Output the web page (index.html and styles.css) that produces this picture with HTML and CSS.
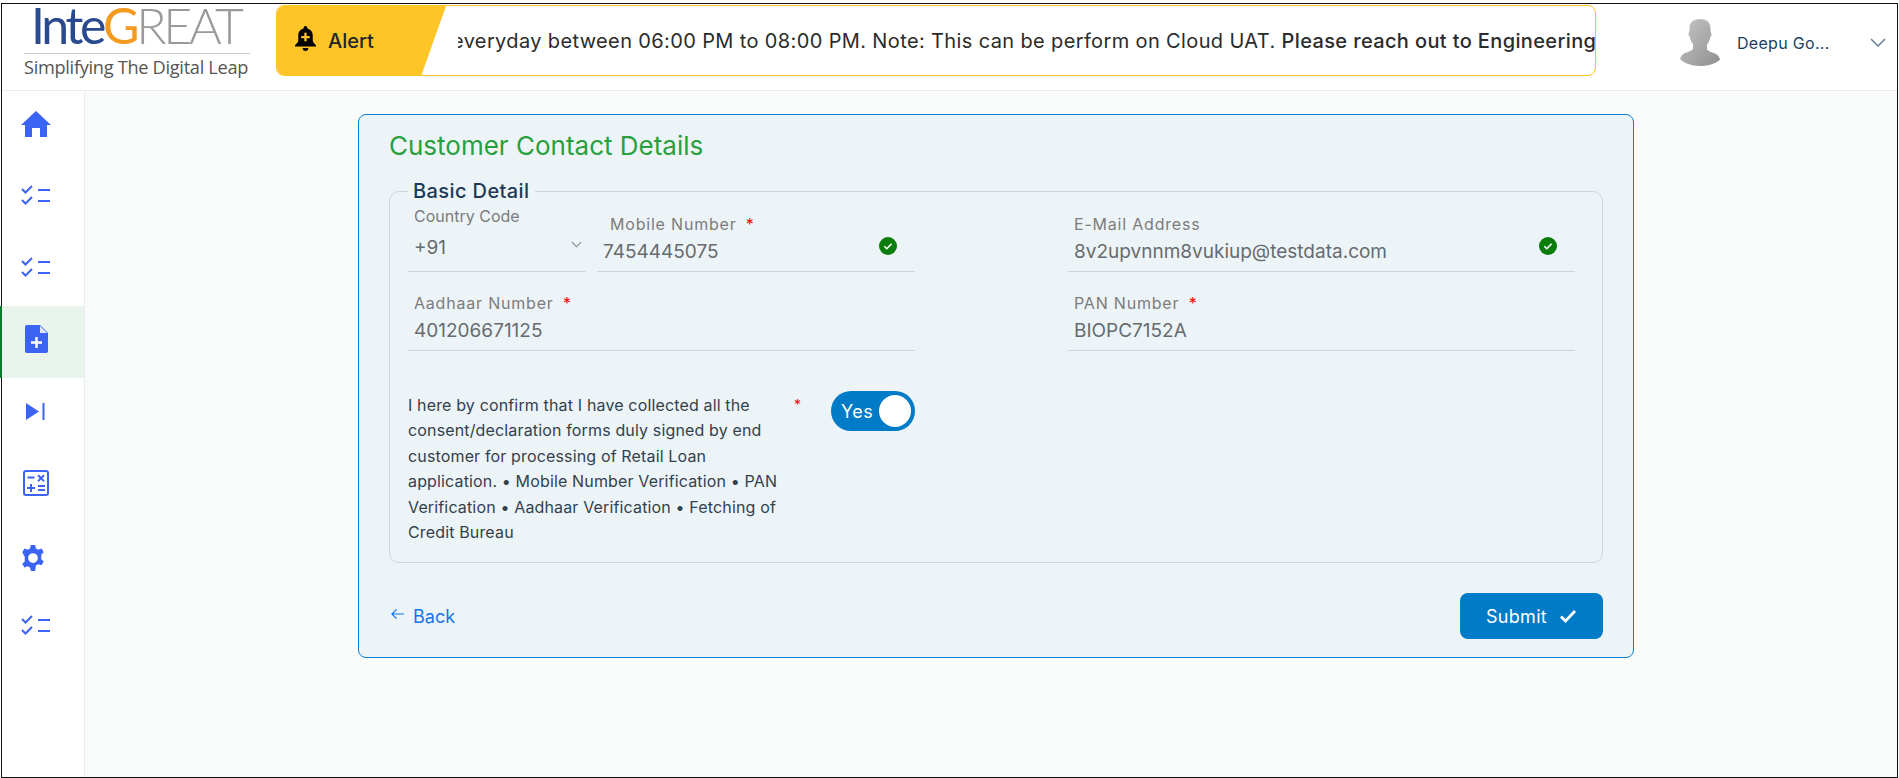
FILE: index.html
```html
<!DOCTYPE html>
<html lang="en">
<head>
  <meta charset="UTF-8" />
  <meta name="viewport" content="width=device-width, initial-scale=1.0" />
  <title>Customer Contact Details</title>
  <link rel="stylesheet" href="styles.css">
</head>
<body>
  <div class="frame">
    <header class="topbar">
      <div class="logo">
        <div class="logo-word"><span class="logo-inte">Inte</span><span class="logo-g">G</span><span class="logo-reat">REAT</span></div>
        <div class="logo-tag">Simplifying The Digital Leap</div>
      </div>

      <div class="alert">
        <div class="alert-tag">
          <svg class="bell" viewBox="0 0 22 26">
            <path fill="#000" d="M11 0a2 2 0 0 1 2 2v.6c3.6.8 5.6 3.8 5.6 7.4v5.2c0 1.6 1.2 3 3.4 4.8v1.5H0V20c2.2-1.8 3.4-3.2 3.4-4.8V10c0-3.6 2-6.6 5.6-7.4V2a2 2 0 0 1 2-2z"/>
            <path fill="#000" d="M8 23h6a3 3 0 0 1-6 0z"/>
            <path fill="#ffc526" d="M9.8 7h2.4v3.3h3.3v2.4h-3.3V16H9.8v-3.3H6.5v-2.4h3.3z"/>
          </svg>
          <span>Alert</span>
        </div>
        <div class="alert-text">
          <p>everyday between 06:00 PM to 08:00 PM. Note: This can be perform on Cloud UAT. <b>Please reach out to Engineering</b></p>
        </div>
      </div>

      <div class="user">
        <svg class="avatar" viewBox="0 0 40 47">
          <defs>
            <linearGradient id="avatarGrad" x1="0" y1="0" x2="1" y2="1">
              <stop offset="0" stop-color="#c6c6c6"/>
              <stop offset="1" stop-color="#8f8f8f"/>
            </linearGradient>
          </defs>
          <path fill="url(#avatarGrad)" d="M20 0c7 0 10.500 3.500 10.500 10 0 2 .3 3.500.8 4.500.5 1.200 0 3-1 3.500-.5 3-1.800 6-3.300 7.500v5c1 1.500 5 3 8 4 2.500 1 4.500 3.500 5 6-4 4-11 6.500-20 6.500S4 44 0 40c.5-2.500 2.500-5 5-6 3-1 7-2.500 8-4v-5c-1.500-1.500-2.800-4.500-3.300-7.500-1-.5-1.500-2.300-1-3.500.5-1 .8-2.500.8-4.500C9.500 3.500 13 0 20 0z"/>
        </svg>
        <span class="user-name">Deepu Go...</span>
        <svg class="user-caret" viewBox="0 0 16 9"><path d="M1 1l7 7 7-7"/></svg>
      </div>
    </header>

    <div class="content">
      <nav class="sidebar">
        <a class="nav-item">
          <svg class="icon" viewBox="0 0 30 26"><path d="M15 0L30 14h-4v12h-7v-9h-8v9H4V14H0z"/></svg>
        </a>
        <a class="nav-item">
          <svg class="icon-line" viewBox="0 0 30 20"><path d="M1 4l3.500 3.500L11 1M1 15l3.500 3.500L11 12M17 5h12M17 16h12"/></svg>
        </a>
        <a class="nav-item">
          <svg class="icon-line" viewBox="0 0 30 20"><path d="M1 4l3.500 3.500L11 1M1 15l3.500 3.500L11 12M17 5h12M17 16h12"/></svg>
        </a>
        <a class="nav-item active">
          <svg class="icon icon-doc" viewBox="0 0 23 28">
            <path d="M2 0h13l8 8v18a2 2 0 0 1-2 2H2a2 2 0 0 1-2-2V2a2 2 0 0 1 2-2z"/>
            <path fill="#e0e6f5" d="M15 1l7 7h-7z"/>
            <path fill="#fff" d="M10.300 12h2.400v4.300H17v2.400h-4.300V23h-2.400v-4.300H6v-2.400h4.300z"/>
          </svg>
        </a>
        <a class="nav-item">
          <svg class="icon icon-skip" viewBox="0 0 19 17"><path d="M0 0l13 8.500L0 17zM16.500 0h2v17h-2z"/></svg>
        </a>
        <a class="nav-item">
          <svg class="icon icon-calc" viewBox="0 0 26 26">
            <path fill-rule="evenodd" d="M3 0h20a3 3 0 0 1 3 3v20a3 3 0 0 1-3 3H3a3 3 0 0 1-3-3V3a3 3 0 0 1 3-3zm0 2a1 1 0 0 0-1 1v20a1 1 0 0 0 1 1h20a1 1 0 0 0 1-1V3a1 1 0 0 0-1-1z"/>
            <path d="M4.500 6.500h7v2h-7zM7 14h2v3h3v2H9v3H7v-3H4v-2h3zM15 15h7v2h-7zM15 19h7v2h-7zM15.700 4.500l2.300 2.300 2.300-2.300 1.400 1.400-2.300 2.300 2.300 2.300-1.400 1.400-2.300-2.300-2.300 2.300-1.400-1.400 2.300-2.300-2.300-2.300z"/>
          </svg>
        </a>
        <a class="nav-item">
          <svg class="icon icon-gear" viewBox="0 0 24 24"><path fill-rule="evenodd" d="M10 0h4l.7 3.200c.8.3 1.500.6 2.100 1.100l3.100-1 2 3.500-2.400 2.200c.1.600.2 1.300.2 2s-.1 1.400-.2 2l2.400 2.200-2 3.500-3.100-1c-.6.500-1.300.8-2.100 1.100L14 24h-4l-.7-3.200c-.8-.3-1.500-.6-2.100-1.100l-3.100 1-2-3.500 2.400-2.200c-.1-.6-.2-1.300-.2-2s.1-1.400.2-2L2.100 6.800l2-3.500 3.100 1c.6-.5 1.300-.8 2.100-1.100zM12 7.500a4.500 4.500 0 1 0 0 9 4.500 4.500 0 0 0 0-9z"/></svg>
        </a>
        <a class="nav-item nav-last">
          <svg class="icon-line" viewBox="0 0 30 20"><path d="M1 4l3.500 3.500L11 1M1 15l3.500 3.500L11 12M17 5h12M17 16h12"/></svg>
        </a>
      </nav>

      <main class="main">
        <section class="card">
          <h1>Customer Contact Details</h1>

          <fieldset class="basic">
            <legend>Basic Detail</legend>

            <div class="form-grid">
              <div class="phone-row">
                <div class="field field-select">
                  <label class="label-top">Country Code</label>
                  <div class="value">+91
                    <svg class="select-caret" viewBox="0 0 12 7"><path d="M1 1l5 5 5-5"/></svg>
                  </div>
                </div>
                <div class="field field-mobile">
                  <label>Mobile Number <i>*</i></label>
                  <div class="value">7454445075
                    <svg class="ok" viewBox="0 0 18 18"><circle cx="9" cy="9" r="9"/><path d="M5.300 9.200l2.500 2.500 4.800-5"/></svg>
                  </div>
                </div>
              </div>

              <div class="field">
                <label>E-Mail Address</label>
                <div class="value">8v2upvnnm8vukiup@testdata.com
                  <svg class="ok" viewBox="0 0 18 18"><circle cx="9" cy="9" r="9"/><path d="M5.300 9.200l2.500 2.500 4.800-5"/></svg>
                </div>
              </div>

              <div class="field">
                <label>Aadhaar Number <i>*</i></label>
                <div class="value">401206671125</div>
              </div>

              <div class="field">
                <label>PAN Number <i>*</i></label>
                <div class="value">BIOPC7152A</div>
              </div>
            </div>

            <div class="consent">
              <p>I here by confirm that I have collected all the consent/declaration forms duly signed by end customer for processing of Retail Loan application. • Mobile Number Verification • PAN Verification • Aadhaar Verification • Fetching of Credit Bureau</p>
              <i>*</i>
              <div class="toggle"><span>Yes</span><b></b></div>
            </div>
          </fieldset>

          <div class="actions">
            <a class="back">
              <svg viewBox="0 0 14 12"><path d="M6 1L1 6l5 5M1 6h13"/></svg>
              Back
            </a>
            <button class="submit">Submit
              <svg viewBox="0 0 18 14"><path d="M2 7.500l4.500 4.500L16 2"/></svg>
            </button>
          </div>
        </section>
      </main>
    </div>
  </div>
</body>
</html>
```

FILE: styles.css
```css
* {
  box-sizing: border-box;
}
html, body {
  margin: 0;
  height: 778px;
  overflow: hidden;
  background: #fff;
}
body {
  padding: 3px 1px 0;
  font-family: Inter, "Liberation Sans", sans-serif;
  color: #212529;
}
.frame {
  height: 775px;
  border: 1px solid #111;
  display: flex;
  flex-direction: column;
}

/* top bar */
.topbar {
  height: 87px;
  flex: none;
  display: flex;
  align-items: flex-start;
  background: #fff;
  border-bottom: 1px solid #e9edf0;
}
.logo {
  width: 274px;
  flex: none;
  padding-left: 22px;
}
.logo-word {
  height: 50px;
  width: 226px;
  padding-left: 7px;
  font-family: Lato, sans-serif;
  font-size: 50px;
  line-height: 42px;
  letter-spacing: -3.300px;
  border-bottom: 1px solid #ccc;
  white-space: nowrap;
}
.logo-inte { color: #2a4a8f; }
.logo-g { color: #f39a1f; }
.logo-reat { color: #9a9a9a; font-weight: 300; }
.logo-tag {
  font-family: "Open Sans", sans-serif;
  font-size: 18.200px;
  line-height: 26px;
  color: #555;
  letter-spacing: -0.3px;
  white-space: nowrap;
}
.alert {
  width: 1320px;
  height: 71px;
  margin-top: 1px;
  flex: none;
  display: flex;
  align-items: center;
  background: #fff;
  border: 1px solid #ffc526;
  border-radius: 8px;
  overflow: hidden;
}
.alert-tag {
  width: 169px;
  height: 100%;
  flex: none;
  display: flex;
  align-items: center;
  gap: 12px;
  padding-left: 18px;
  background: #ffc526;
  clip-path: polygon(0 0, 100% 0, 85.500% 100%, 0 100%);
  font-size: 20px;
  font-weight: 500;
}
.bell {
  width: 21px;
  height: 25px;
  margin-top: -4px;
}
.alert-text {
  flex: 1;
  min-width: 0;
  margin-left: 12px;
  overflow: hidden;
}
.alert-text p {
  margin: 0;
  font-size: 20px;
  letter-spacing: 0.37px;
  text-indent: -6px;
  white-space: nowrap;
  color: #2b2b2b;
}
.alert-text b {
  font-weight: 500;
}
.user {
  flex: 1;
  height: 70px;
  display: flex;
  align-items: center;
  padding-left: 84px;
}
.avatar {
  width: 40px;
  height: 47px;
  margin-top: 6px;
}
.user-name {
  margin-left: 17px;
  margin-top: 8px;
  font-size: 16px;
  letter-spacing: 0.3px;
  color: #1b3f66;
  white-space: nowrap;
}
.user-caret {
  width: 16px;
  height: 9px;
  margin-left: 40px;
  margin-top: 6px;
  fill: none;
  stroke: #6d8299;
  stroke-width: 1.600;
}

/* sidebar */
.content {
  flex: 1;
  min-height: 0;
  display: flex;
}
.sidebar {
  width: 83px;
  flex: none;
  background: #fff;
  border-right: 1px solid #e8edf3;
}
.nav-item {
  height: 72px;
  display: flex;
  align-items: center;
  justify-content: center;
  padding: 0 15px 6px 0;
}
.nav-item:first-child {
  height: 71px;
}
.nav-item.active {
  margin-left: -2px;
  padding-right: 13px;
  background: #e9f4ec;
  border-left: 2px solid #0f7b2e;
}
.nav-last {
  padding-bottom: 10px;
}
.icon {
  width: 30px;
  height: 26px;
  fill: #3c64f4;
}
.icon-doc { width: 23px; height: 28px; }
.icon-skip { width: 19px; height: 17px; }
.icon-calc { width: 26px; height: 26px; }
.icon-gear { width: 26px; height: 26px; margin: 6px 6px 0 0; }
.icon-line {
  width: 30px;
  height: 20px;
  fill: none;
  stroke: #3c64f4;
  stroke-width: 2;
}

/* main */
.main {
  flex: 1;
  min-width: 0;
  background: #f9fbfb;
  padding: 23px 0 0 273px;
}
.card {
  width: 1276px;
  height: 544px;
  padding: 13px 30px 0;
  background: #edf4f7;
  border: 1px solid #0d7fcf;
  border-radius: 8px;
}
h1 {
  margin: 0 0 16px;
  font-size: 26px;
  line-height: 36px;
  font-weight: 400;
  color: #28a03e;
}
.basic {
  height: 383px;
  margin: 0;
  padding: 0 18px;
  border: 1px solid #d0d5d9;
  border-radius: 10px;
}
legend {
  margin-left: 0;
  padding: 0 5px;
  font-size: 20px;
  line-height: 22px;
  font-weight: 500;
  letter-spacing: 0.4px;
  color: #1c3a57;
}
.form-grid {
  margin-top: -9px;
  display: grid;
  grid-template-columns: 507px 507px;
  column-gap: 153px;
}
.phone-row {
  display: flex;
  gap: 11px;
}
.field {
  height: 79px;
  display: flex;
  flex-direction: column;
  justify-content: flex-end;
}
.field-select { width: 178px; }
.field-mobile { flex: 1; }
label {
  padding-left: 6px;
  font-size: 16px;
  line-height: 20px;
  letter-spacing: 0.8px;
  color: #7c7c7c;
}
label i,
.consent i {
  margin-left: 4px;
  font-style: normal;
  color: #f00;
}
.value {
  height: 38px;
  padding: 5px 0 0 6px;
  font-size: 19px;
  line-height: 26px;
  color: #666b70;
  border-bottom: 1px solid #ced6dc;
  display: flex;
  align-items: flex-start;
  justify-content: space-between;
}
.field-select .label-top {
  margin-bottom: 8px;
  letter-spacing: 0;
}
.field-select .value {
  padding-top: 1px;
}
.field-mobile label {
  padding-left: 13px;
}
.select-caret {
  width: 11px;
  height: 7px;
  margin: 6px 4px 0 0;
  fill: none;
  stroke: #7c8791;
  stroke-width: 1.200;
}
.ok {
  width: 18px;
  height: 18px;
  margin: -2px 18px 0 0;
  flex: none;
}
.ok circle {
  fill: #0a7d0a;
}
.ok path {
  fill: none;
  stroke: #fff;
  stroke-width: 1.600;
}
.consent {
  margin-top: 42px;
  display: flex;
  align-items: flex-start;
}
.consent p {
  width: 375px;
  margin: 0;
  font-size: 16px;
  line-height: 25.400px;
  letter-spacing: 0.15px;
  color: #33414d;
}
.consent i {
  width: 37px;
  margin: 5px 0 0 11px;
  font-size: 14px;
  line-height: 14px;
}
.toggle {
  width: 84px;
  height: 40px;
  margin-top: -2px;
  padding: 4px 4px 4px 10px;
  display: flex;
  align-items: center;
  justify-content: space-between;
  background: #007bc7;
  border-radius: 20px;
  color: #fff;
  font-size: 18px;
  letter-spacing: 0.4px;
}
.toggle b {
  width: 32px;
  height: 32px;
  background: #fff;
  border-radius: 50%;
}

.actions {
  margin-top: 30px;
  display: flex;
  align-items: center;
  justify-content: space-between;
}
.back {
  display: flex;
  align-items: center;
  gap: 9px;
  padding-left: 2px;
  font-size: 18px;
  color: #1473ee;
}
.back svg {
  width: 13px;
  height: 12px;
  margin-top: -4px;
  fill: none;
  stroke: #1473ee;
  stroke-width: 1.300;
}
.submit {
  width: 143px;
  height: 46px;
  display: flex;
  align-items: center;
  justify-content: center;
  gap: 12px;
  background: #007bc7;
  color: #fff;
  border: 0;
  border-radius: 8px;
  font-family: inherit;
  font-size: 18px;
  letter-spacing: 0.3px;
}
.submit svg {
  width: 18px;
  height: 14px;
  fill: none;
  stroke: #fff;
  stroke-width: 2.800;
}
```
